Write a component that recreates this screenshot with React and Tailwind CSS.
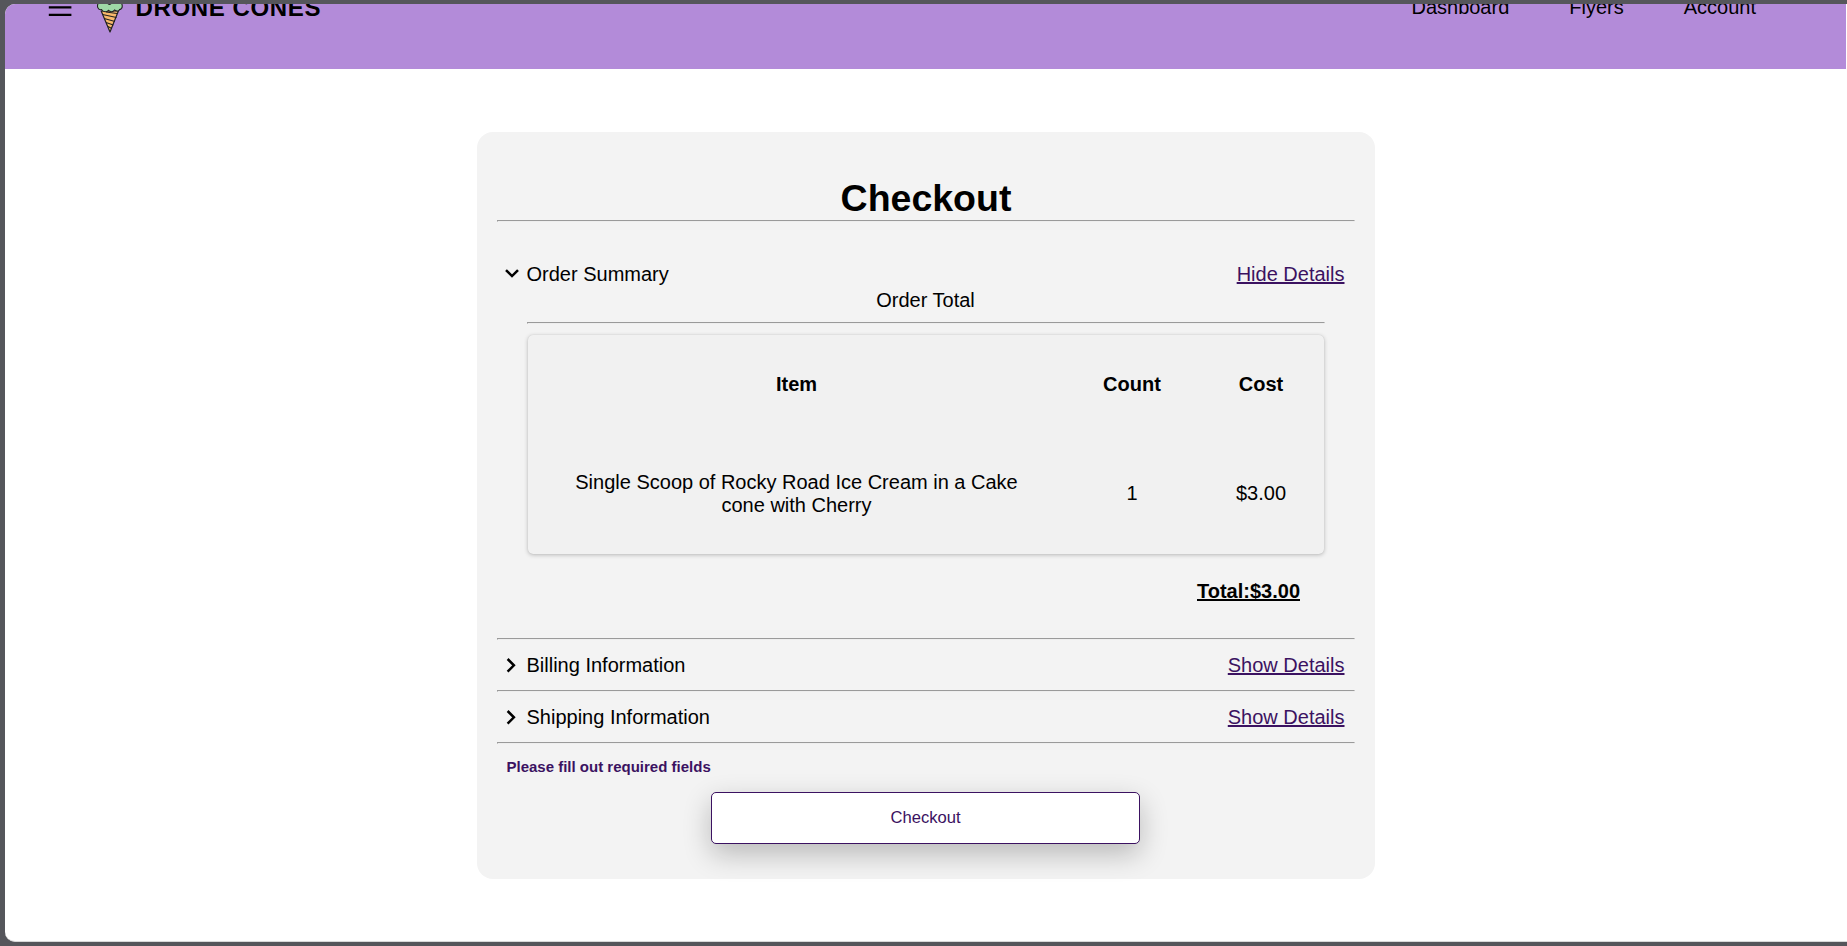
import React from "react";

const Rule = () => (
  <div className="h-[2px] w-full border border-t-[#9a9a9a] border-l-[#9a9a9a] border-b-[#eeeeee] border-r-[#eeeeee]" />
);

const Chevron = ({ open }) => (
  <svg width="16" height="23" viewBox="0 0 16 23" fill="none" stroke="#000" strokeWidth="2.5" className="shrink-0">
    <path d={open ? "M2 7.1 L8 13.1 L14 7.1" : "M3.6 5 L9.9 11.3 L3.6 17.6"} />
  </svg>
);

const Section = ({ title, link, open }) => (
  <div className="flex h-[23px] items-center pl-[7px] pr-[10.5px] leading-[23px]">
    <Chevron open={open} />
    <span className="ml-[6.5px]">{title}</span>
    <a className="ml-auto text-[#3b1261] underline decoration-2 underline-offset-[1px]">{link}</a>
  </div>
);

const Cone = () => (
  <svg width="28" height="36" viewBox="0 0 28 36" className="shrink-0">
    <path d="M5.2 10 L14 31 L22.4 10 Z" fill="#f9b96b" stroke="#222" strokeWidth="1.2" strokeLinejoin="round" />
    <path d="M6.5 13.5 L20.5 16.5 M8.2 17.5 L19 20.5 M10 21.5 L17.3 24 M12 25.5 L15.8 27.5 M21 12.5 L10 11" stroke="#222" strokeWidth="1.1" fill="none" />
    <path d="M3 1 C0 5 2 9.6 5.5 8.6 C7 11.6 11 11.2 12.5 9.4 C14.5 11.2 17 11.2 18.5 9 C21 10.8 23.5 10 23.5 8.6 C27.5 8 26.5 3 24.5 1 Z" fill="#9ed8a6" stroke="#222" strokeWidth="1.1" />
    <path d="M11 2.4 Q13.5 5.4 16 2.4 Z" fill="#222" />
  </svg>
);

export default function App() {
  return (
    <div className="h-[946px] w-full overflow-hidden bg-[#55565b] pt-[4px] pb-[4px] pl-[5px] font-['Liberation_Sans',Arial,sans-serif] text-[20px] text-black">
      <div className="h-[938px] overflow-hidden rounded-l-[10px] border-b border-[#d8d8d8] bg-white pr-px">
        <header className="flex h-[65px] items-start overflow-hidden bg-[#b38bd9] pl-[43px] pr-[90px]">
          <svg width="24" height="16" viewBox="0 0 24 16" className="mt-[-2px] shrink-0">
            <path d="M0.8 5.4h22.6M0.8 12.8h22.6" stroke="#000" strokeWidth="2.3" />
          </svg>
          <div className="-mt-[3px] ml-[24px]">
            <Cone />
          </div>
          <span className="-mt-[10px] ml-[11.5px] text-[24px] font-bold leading-[28px] tracking-[0.62px]">DRONE CONES</span>
          <nav className="-mt-[8px] ml-auto flex gap-[60px] leading-[23px]">
            <span>Dashboard</span>
            <span>Flyers</span>
            <span>Account</span>
          </nav>
        </header>

        <main className="ml-[472px] mt-[63px] h-[747px] w-[898px] rounded-[16px] bg-[#f3f3f3] px-[20px] pt-[44px]">
          <h1 className="h-[44px] text-center text-[37.5px] font-bold leading-[44px]">Checkout</h1>
          <Rule />
          <div className="h-[41px]" />
          <Section title="Order Summary" link="Hide Details" open />
          <div className="px-[30px] pt-[3px]">
            <p className="pr-px text-center leading-[23px]">Order Total</p>
            <div className="h-[10px]" />
            <Rule />
            <div className="mx-px mt-[11px] grid h-[219px] grid-cols-[537px_134px_124px] grid-rows-[98px_121px] items-center justify-items-center rounded-[5px] bg-[#f1f1f1] text-center leading-[23px] shadow-[0_0_1px_rgba(0,0,0,0.14),0_1px_4px_rgba(0,0,0,0.24)]">
              <b>Item</b>
              <b>Count</b>
              <b>Cost</b>
              <span className="w-[460px]">Single Scoop of Rocky Road Ice Cream in a Cake cone with Cherry</span>
              <span>1</span>
              <span>$3.00</span>
            </div>
            <p className="mt-[26px] pr-[25px] text-right font-bold leading-[23px] underline decoration-2 underline-offset-[1px]">Total:$3.00</p>
          </div>
          <div className="h-[35px]" />
          <Rule />
          <div className="pt-[14px] pb-[13px]">
            <Section title="Billing Information" link="Show Details" />
          </div>
          <Rule />
          <div className="pt-[14px] pb-[13px]">
            <Section title="Shipping Information" link="Show Details" />
          </div>
          <Rule />
          <p className="mt-[14px] pl-[9.5px] text-[15px] font-bold leading-[17px] text-[#3b1261]">Please fill out required fields</p>
          <button className="ml-[214px] mt-[17px] block h-[52px] w-[429px] rounded-[5px] border border-[#3b1261] bg-white text-[16.6px] text-[#3b1261] shadow-[0_10px_28px_rgba(0,0,0,0.24)]">
            Checkout
          </button>
        </main>
      </div>
    </div>
  );
}
